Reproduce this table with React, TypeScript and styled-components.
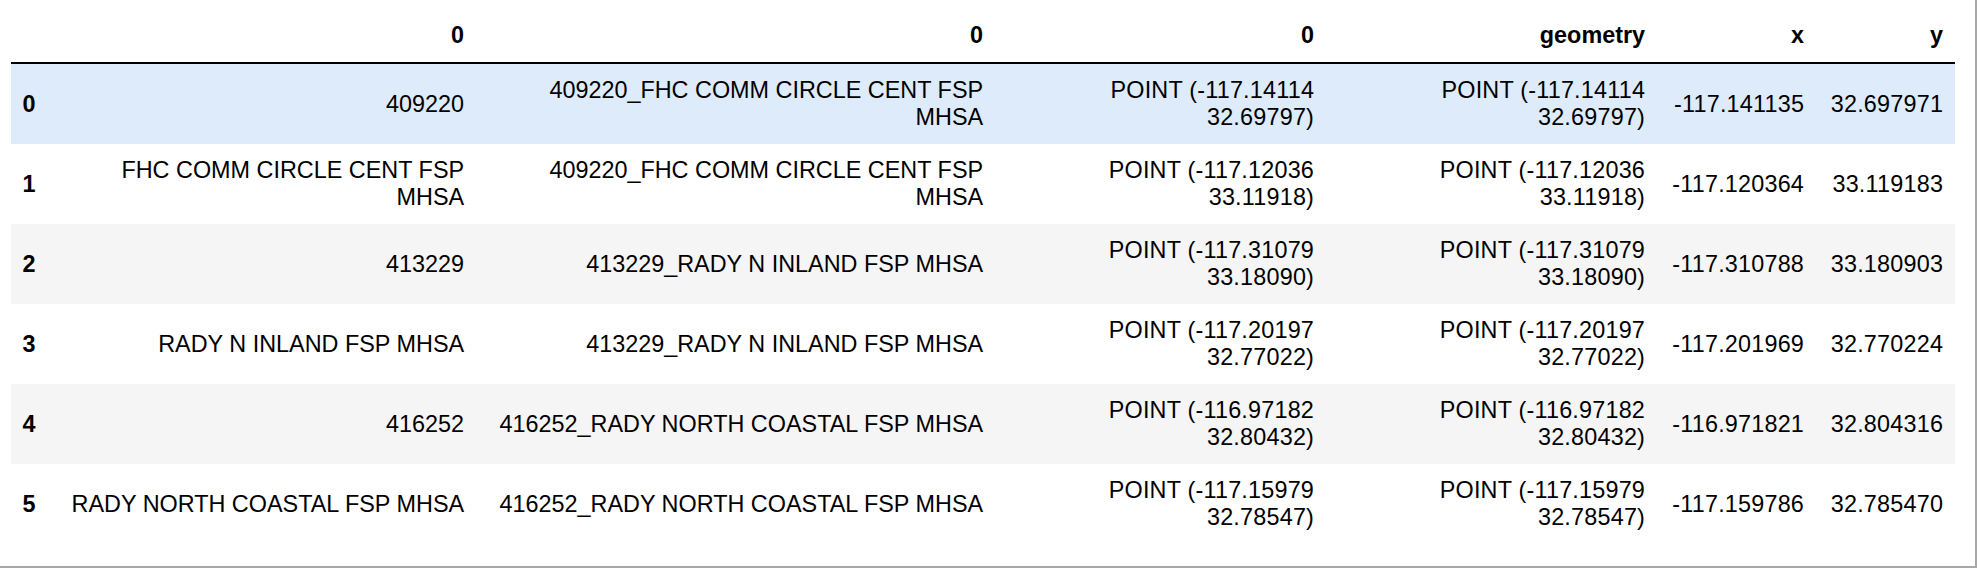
import React from "react";
import styled, { createGlobalStyle } from "styled-components";

const GlobalStyle = createGlobalStyle`
  html, body {
    margin: 0;
    padding: 0;
    background: #ffffff;
  }
  body {
    font-family: "Liberation Sans", Arial, Helvetica, sans-serif;
    color: #000000;
  }
`;

const Frame = styled.div`
  box-sizing: border-box;
  width: 1977px;
  height: 568px;
  padding: 8.7px 0 0 11px;
  border-right: 2px solid #a8a8a8;
  border-bottom: 2px solid #a8a8a8;
  background: #ffffff;
`;

const Table = styled.table`
  border-collapse: collapse;
  border-spacing: 0;
  table-layout: fixed;
  width: 1943.6px;
  font-family: "Liberation Sans", Arial, Helvetica, sans-serif;
  font-size: 23.4px;
  line-height: 26.7px;
  color: #000000;
`;

const HeadRow = styled.tr`
  border-bottom: 2px solid #000000;
`;

const HeadCell = styled.th`
  padding: 13.3px 11.5px;
  text-align: right;
  vertical-align: middle;
  font-weight: bold;
  white-space: normal;
`;

const BodyRow = styled.tr<{ $bg: string }>`
  background: ${(p) => p.$bg};
  height: 80px;
`;

const IndexCell = styled.th`
  padding: 13.3px 11.5px;
  text-align: left;
  vertical-align: middle;
  font-weight: bold;
`;

const Cell = styled.td<{ $numeric?: boolean }>`
  padding: 13.3px 11.5px;
  text-align: right;
  vertical-align: middle;
  font-weight: normal;
  letter-spacing: ${(p) => (p.$numeric ? "0.2px" : "0")};
`;

const PointText = styled.span`
  display: inline-block;
  max-width: 10em;
  text-align: right;
`;

const widths = [40, 424.6, 519, 331, 331, 159, 139];

type Row = {
  a: string;
  b: string;
  p: string;
  g: string;
  x: string;
  y: string;
};

const rows: Row[] = [
  {
    a: "409220",
    b: "409220_FHC COMM CIRCLE CENT FSP MHSA",
    p: "POINT (-117.14114 32.69797)",
    g: "POINT (-117.14114 32.69797)",
    x: "-117.141135",
    y: "32.697971",
  },
  {
    a: "FHC COMM CIRCLE CENT FSP MHSA",
    b: "409220_FHC COMM CIRCLE CENT FSP MHSA",
    p: "POINT (-117.12036 33.11918)",
    g: "POINT (-117.12036 33.11918)",
    x: "-117.120364",
    y: "33.119183",
  },
  {
    a: "413229",
    b: "413229_RADY N INLAND FSP MHSA",
    p: "POINT (-117.31079 33.18090)",
    g: "POINT (-117.31079 33.18090)",
    x: "-117.310788",
    y: "33.180903",
  },
  {
    a: "RADY N INLAND FSP MHSA",
    b: "413229_RADY N INLAND FSP MHSA",
    p: "POINT (-117.20197 32.77022)",
    g: "POINT (-117.20197 32.77022)",
    x: "-117.201969",
    y: "32.770224",
  },
  {
    a: "416252",
    b: "416252_RADY NORTH COASTAL FSP MHSA",
    p: "POINT (-116.97182 32.80432)",
    g: "POINT (-116.97182 32.80432)",
    x: "-116.971821",
    y: "32.804316",
  },
  {
    a: "RADY NORTH COASTAL FSP MHSA",
    b: "416252_RADY NORTH COASTAL FSP MHSA",
    p: "POINT (-117.15979 32.78547)",
    g: "POINT (-117.15979 32.78547)",
    x: "-117.159786",
    y: "32.785470",
  },
];

const rowBg = (i: number) => {
  if (i === 0) return "#deebfa";
  return i % 2 === 0 ? "#f5f5f5" : "#ffffff";
};

export default function App() {
  return (
    <>
      <GlobalStyle />
      <Frame>
        <Table>
          <colgroup>
            {widths.map((w, i) => (
              <col key={i} style={{ width: `${w}px` }} />
            ))}
          </colgroup>
          <thead>
            <HeadRow>
              <HeadCell></HeadCell>
              <HeadCell>0</HeadCell>
              <HeadCell>0</HeadCell>
              <HeadCell>0</HeadCell>
              <HeadCell>geometry</HeadCell>
              <HeadCell>x</HeadCell>
              <HeadCell>y</HeadCell>
            </HeadRow>
          </thead>
          <tbody>
            {rows.map((r, i) => (
              <BodyRow key={i} $bg={rowBg(i)}>
                <IndexCell>{i}</IndexCell>
                <Cell>{r.a}</Cell>
                <Cell>{r.b}</Cell>
                <Cell $numeric>
                  <PointText>{r.p}</PointText>
                </Cell>
                <Cell $numeric>
                  <PointText>{r.g}</PointText>
                </Cell>
                <Cell $numeric>{r.x}</Cell>
                <Cell $numeric>{r.y}</Cell>
              </BodyRow>
            ))}
          </tbody>
        </Table>
      </Frame>
    </>
  );
}
